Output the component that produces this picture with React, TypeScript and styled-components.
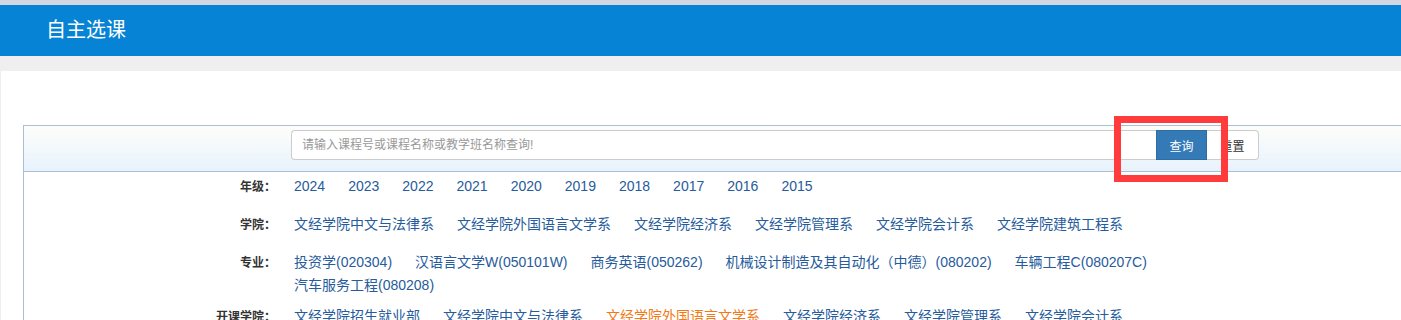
import React from 'react';
import styled, { createGlobalStyle } from 'styled-components';

const GlobalStyle = createGlobalStyle`
	html, body {
		margin: 0;
		padding: 0;
		background: #efefef;
		overflow: hidden;
		font-family: "Liberation Sans", "Noto Sans CJK SC", sans-serif;
	}
	* {
		box-sizing: border-box;
	}
`;

const TopStrip = styled.div`
	height: 5px;
	background: #d5d7e0;
`;

const Header = styled.header`
	height: 51px;
	line-height: 51px;
	padding-left: 46px;
	background: #0683d4;
	color: #fff;
	font-size: 20px;
`;

const Main = styled.main`
	padding: 15px 0 0 1px;
	background: #efefef;
`;

const Panel = styled.section`
	background: #fff;
	padding: 54px 0 0 22px;
	min-height: 260px;
	overflow: hidden;
`;

const Box = styled.div`
	border: 1px solid #a9bfd6;
	margin-right: -6px;
`;

const SearchBar = styled.div`
	position: relative;
	display: flex;
	height: 46px;
	padding: 4px 0 0 267px;
	border-bottom: 1px solid #a9bfd6;
	background: linear-gradient(to bottom, #fdfefa 0%, #e8f2fc 100%);
`;

const SearchInput = styled.input`
	width: 865px;
	height: 30px;
	padding: 0 10px;
	border: 1px solid #ccc;
	border-right: none;
	border-radius: 4px 0 0 4px;
	font-family: inherit;
	font-size: 12px;
	color: #555;
	background: #fff;
	outline: none;

	&::placeholder {
		color: #999;
	}
`;

const Button = styled.button<{ $primary?: boolean }>`
	width: ${(p) => (p.$primary ? '51px' : '52px')};
	height: 30px;
	padding: 0;
	font-family: inherit;
	font-size: 12px;
	border: 1px solid ${(p) => (p.$primary ? '#2e6da4' : '#ccc')};
	border-left: ${(p) => (p.$primary ? '1px solid #2e6da4' : 'none')};
	background: ${(p) => (p.$primary ? '#337ab7' : '#fff')};
	color: ${(p) => (p.$primary ? '#fff' : '#333')};
	border-radius: ${(p) => (p.$primary ? '0' : '0 4px 4px 0')};
`;

const Highlight = styled.div`
	position: absolute;
	left: 1090px;
	top: -10px;
	width: 114px;
	height: 66px;
	border: 7px solid #ff3b3b;
	pointer-events: none;
`;

const FilterList = styled.div`
	padding-top: 3px;
`;

const FilterRow = styled.div`
	display: flex;
	min-height: 38px;
	padding-bottom: 8px;
`;

const Label = styled.div`
	width: 252px;
	margin-right: 18px;
	text-align: right;
	line-height: 24px;
	font-size: 12px;
	font-weight: bold;
	color: #333;
`;

const Values = styled.div`
	width: 965px;
	display: flex;
	flex-wrap: wrap;
	column-gap: 23px;
	line-height: 23px;
	font-size: 14px;
`;

const Item = styled.a<{ $active?: boolean }>`
	color: ${(p) => (p.$active ? '#f07a17' : '#265b9c')};
	text-decoration: none;
	white-space: nowrap;
	cursor: pointer;
`;

const filters: { label: string; items: string[]; active?: number }[] = [
	{ label: '年级：', items: ['2024', '2023', '2022', '2021', '2020', '2019', '2018', '2017', '2016', '2015'] },
	{
		label: '学院：',
		items: ['文经学院中文与法律系', '文经学院外国语言文学系', '文经学院经济系', '文经学院管理系', '文经学院会计系', '文经学院建筑工程系'],
	},
	{
		label: '专业：',
		items: [
			'投资学(020304)',
			'汉语言文学W(050101W)',
			'商务英语(050262)',
			'机械设计制造及其自动化（中德）(080202)',
			'车辆工程C(080207C)',
			'汽车服务工程(080208)',
		],
	},
	{
		label: '开课学院：',
		items: ['文经学院招生就业部', '文经学院中文与法律系', '文经学院外国语言文学系', '文经学院经济系', '文经学院管理系', '文经学院会计系'],
		active: 2,
	},
];

export default function App() {
	return (
		<>
			<GlobalStyle />
			<TopStrip />
			<Header>自主选课</Header>
			<Main>
				<Panel>
					<Box>
						<SearchBar>
							<SearchInput placeholder="请输入课程号或课程名称或教学班名称查询!" />
							<Button $primary>查询</Button>
							<Button>重置</Button>
							<Highlight />
						</SearchBar>
						<FilterList>
							{filters.map((f) => (
								<FilterRow key={f.label}>
									<Label>{f.label}</Label>
									<Values>
										{f.items.map((it, i) => (
											<Item key={it} $active={f.active === i}>
												{it}
											</Item>
										))}
									</Values>
								</FilterRow>
							))}
						</FilterList>
					</Box>
				</Panel>
			</Main>
		</>
	);
}
